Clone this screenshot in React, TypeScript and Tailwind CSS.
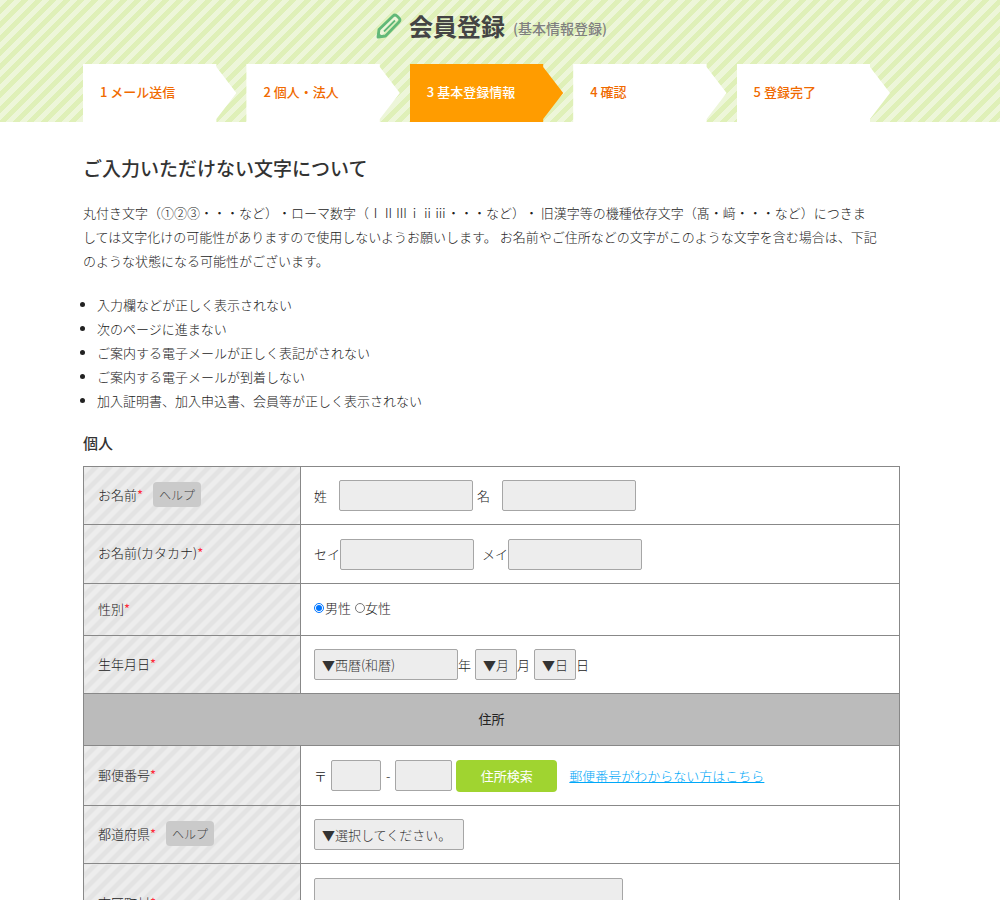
import type { ReactNode } from 'react';

const steps = ['1 メール送信', '2 個人・法人', '3 基本登録情報', '4 確認', '5 登録完了'];

const notes = [
    '入力欄などが正しく表示されない',
    '次のページに進まない',
    'ご案内する電子メールが正しく表記がされない',
    'ご案内する電子メールが到着しない',
    '加入証明書、加入申込書、会員等が正しく表示されない',
];

const field = 'h-[31px] rounded-xs border border-[#a6a6a6] bg-[#ededed] text-[#333]';

function Row({ label, help, height, children }: { label: string; help?: boolean; height: string; children: ReactNode }) {
    return (
        <tr className={height}>
            <th scope="row" className="w-[217px] border border-[#888] px-[14px] pb-[2px] text-left font-light bg-[repeating-linear-gradient(135deg,#ededed_0px,#ededed_5px,#e3e3e3_5px,#e3e3e3_10px)]">
                {label}<span className="font-normal text-[#ff2a3a]">*</span>
                {help && <button type="button" className="ml-[10px] h-[25px] rounded-sm bg-[#cacaca] px-[6px] text-xs text-[#444]">ヘルプ</button>}
            </th>
            <td className="border border-[#888] px-[13px]">
                <div className="flex items-center">{children}</div>
            </td>
        </tr>
    );
}

export default function App() {
    return (
        <div className="bg-white text-[13px] leading-6 font-light text-[#222] font-['Noto_Sans_CJK_JP',sans-serif] [text-spacing-trim:space-all]">
            <header className="pl-[83px] pr-[100px] bg-[repeating-linear-gradient(135deg,#edf6d9_0px,#edf6d9_5px,#dff0b8_5px,#dff0b8_10px)]">
                <div className="flex h-16 items-center justify-center pb-3">
                    <svg viewBox="0 0 26 26" className="mr-[7px] h-[26px] w-[26px]" fill="none" stroke="#62b878" strokeWidth="2.8" strokeLinejoin="round">
                        <path d="M2 24l1-7.500L17 3q2-2 4 0l2 2q2 2 0 4L9.500 23z" />
                        <path d="M8 18.500L19 7.500" strokeWidth="1.800" />
                        <path d="M2 24l1-4 3 3z" fill="#62b878" stroke="none" />
                    </svg>
                    <h1 className="text-2xl font-bold text-[#444]">会員登録</h1>
                    <span className="ml-2 pt-1 text-sm font-medium text-[#808080]">(基本情報登録)</span>
                </div>
                <ol className="grid grid-cols-5">
                    {steps.map((step, i) => (
                        <li
                            key={step}
                            aria-current={i === 2 ? 'step' : undefined}
                            className={`mr-[10px] flex h-[58px] items-center pb-[2px] pl-[17px] font-medium [clip-path:polygon(0_0,calc(100%-20px)_0,calc(100%-20px)_3px,100%_50%,calc(100%-20px)_calc(100%-3px),calc(100%-20px)_100%,0_100%)] ${i === 2 ? 'bg-[#ff9c00] text-white' : 'bg-white text-[#f06a00]'}`}
                        >
                            {step}
                        </li>
                    ))}
                </ol>
            </header>

            <main className="pl-[83px] pr-[100px]">
                <h2 className="pt-[30px] text-[19px] leading-8 font-medium text-[#333]">ご入力いただけない文字について</h2>
                <p className="pt-[17px] pr-5">
                    丸付き文字（①②③・・・など）・ローマ数字（ⅠⅡⅢⅰⅱⅲ・・・など）・ 旧漢字等の機種依存文字（髙・﨑・・・など）につきま<br />
                    しては文字化けの可能性がありますので使用しないようお願いします。 お名前やご住所などの文字がこのような文字を含む場合は、下記のような状態になる可能性がございます。
                </p>
                <ul className="list-disc pt-5 pl-[14px]">
                    {notes.map((note) => <li key={note}>{note}</li>)}
                </ul>

                <h3 className="pt-[18px] pb-[11px] text-[15px] font-medium text-[#333]">個人</h3>
                <form>
                    <table className="w-full border-collapse">
                        <tbody>
                            <Row label="お名前" help height="h-[58px]">
                                <label htmlFor="sei" className="mr-3">姓</label>
                                <input id="sei" className={`${field} w-[134px]`} />
                                <label htmlFor="mei" className="mr-3 ml-1">名</label>
                                <input id="mei" className={`${field} w-[134px]`} />
                            </Row>
                            <Row label="お名前(カタカナ)" height="h-[59px]">
                                <label htmlFor="sei-kana">セイ</label>
                                <input id="sei-kana" className={`${field} w-[134px]`} />
                                <label htmlFor="mei-kana" className="ml-2">メイ</label>
                                <input id="mei-kana" className={`${field} w-[134px]`} />
                            </Row>
                            <Row label="性別" height="h-[52px]">
                                <label className="mr-1 flex items-center pb-1"><input type="radio" name="sex" defaultChecked className="mr-px h-[10px] w-[10px]" />男性</label>
                                <label className="flex items-center pb-1"><input type="radio" name="sex" className="h-[10px] w-[10px]" />女性</label>
                            </Row>
                            <Row label="生年月日" height="h-[58px]">
                                <select id="year" className={`${field} w-[144px] appearance-none px-[7px]`}><option>▼西暦(和暦)</option></select>
                                <label htmlFor="year" className="mr-1">年</label>
                                <select id="month" className={`${field} w-[42px] appearance-none px-[7px]`}><option>▼月</option></select>
                                <label htmlFor="month" className="mr-1">月</label>
                                <select id="day" className={`${field} w-[42px] appearance-none px-[7px]`}><option>▼日</option></select>
                                <label htmlFor="day">日</label>
                            </Row>
                            <tr className="h-[52px]">
                                <th colSpan={2} className="border border-[#888] bg-[#bbb] pb-[2px] text-center font-normal">住所</th>
                            </tr>
                            <Row label="郵便番号" height="h-[60px]">
                                <label htmlFor="zip1" className="mr-1">〒</label>
                                <input id="zip1" className={`${field} w-[50px]`} />
                                <label htmlFor="zip2" className="mx-[5px]">-</label>
                                <input id="zip2" className={`${field} w-[57px]`} />
                                <button type="button" className="ml-1 h-8 w-[101px] rounded-sm bg-[#a0d430] font-normal text-white">住所検索</button>
                                <a href="#zip" className="ml-3 text-[#00a8f8] underline">郵便番号がわからない方はこちら</a>
                            </Row>
                            <Row label="都道府県" help height="h-[58px]">
                                <select aria-label="都道府県" className={`${field} w-[150px] appearance-none px-[7px]`}><option>▼選択してください。</option></select>
                            </Row>
                            <Row label="市区町村" height="h-[80px]">
                                <input aria-label="市区町村" className={`${field} mb-5 w-[309px]`} />
                            </Row>
                        </tbody>
                    </table>
                </form>
            </main>
        </div>
    );
}
